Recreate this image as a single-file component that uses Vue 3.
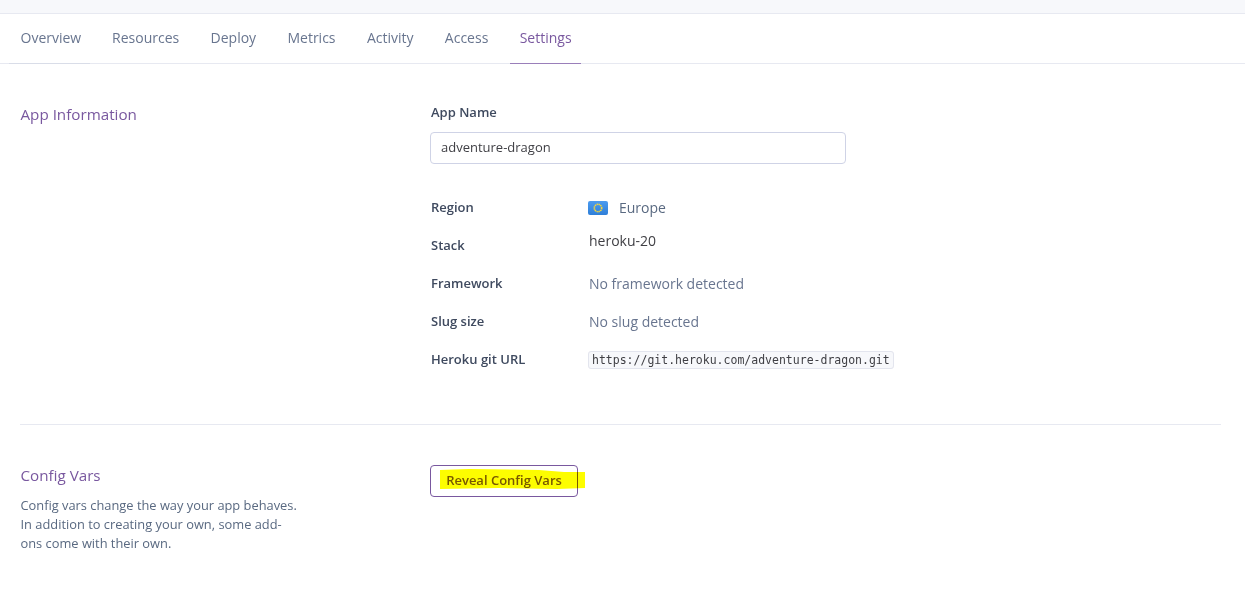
<script setup>
const tabs = ['Overview', 'Resources', 'Deploy', 'Metrics', 'Activity', 'Access', 'Settings']
const activeTab = 'Settings'
</script>

<template>
  <div class="page">
    <div class="top-strip"></div>

    <nav class="tabs">
      <a
        v-for="tab in tabs"
        :key="tab"
        class="tab"
        :class="{ active: tab === activeTab, first: tab === 'Overview' }"
      >{{ tab }}</a>
    </nav>

    <section class="section app-info">
      <h2 class="section-title">App Information</h2>
      <div class="section-body">
        <label class="field-label">App Name</label>
        <input class="name-input" type="text" value="adventure-dragon" />

        <dl class="details">
          <dt>Region</dt>
          <dd class="region">
            <svg class="flag" viewBox="0 0 20 14" width="20" height="14">
              <defs>
                <linearGradient id="flagFill" x1="0" y1="0" x2="0" y2="1">
                  <stop offset="0" stop-color="#4b9bf0" />
                  <stop offset="1" stop-color="#2f7fd8" />
                </linearGradient>
              </defs>
              <rect width="20" height="14" rx="2" fill="url(#flagFill)" />
              <circle cx="10" cy="7" r="3.7" fill="none" stroke="#f5d63c" stroke-width="1.6" stroke-dasharray="1.4 0.54" />
            </svg>
            <span>Europe</span>
          </dd>
          <dt>Stack</dt>
          <dd class="stack">heroku-20</dd>
          <dt>Framework</dt>
          <dd class="muted">No framework detected</dd>
          <dt>Slug size</dt>
          <dd class="muted">No slug detected</dd>
          <dt>Heroku git URL</dt>
          <dd><code class="git-url">https://git.heroku.com/adventure-dragon.git</code></dd>
        </dl>
      </div>
    </section>

    <section class="section config">
      <div class="section-side">
        <h2 class="section-title">Config Vars</h2>
        <p class="section-text">Config vars change the way your app behaves. In addition to creating your own, some add-ons come with their own.</p>
      </div>
      <div class="section-body">
        <div class="reveal-wrap">
          <button class="reveal-btn">Reveal Config Vars</button>
          <svg class="marker" viewBox="0 0 146 24" width="146" height="24">
            <path d="M1 1 L30 0 L100 1 L125 3 L146 3 L146 19 L118 20 L60 19 L1 20 Z" fill="#fdfd00" />
          </svg>
        </div>
      </div>
    </section>
  </div>
</template>

<style scoped>
.page {
  height: 592px;
  overflow: hidden;
  background: #fff;
  font-family: "Open Sans", "Noto Sans", sans-serif;
  font-size: 14px;
  color: #596981;
}

.top-strip {
  height: 13px;
  background: #f7f8fb;
  border-bottom: 1px solid #e7e9f1;
}

.tabs {
  display: flex;
  height: 49px;
  padding-left: 9px;
  border-bottom: 1px solid #e7e9f1;
}

.tab {
  display: flex;
  align-items: center;
  box-sizing: border-box;
  height: 50px;
  margin-right: 12.35px;
  padding: 0 9.5px 3px;
  border-bottom: 1px solid transparent;
  color: #68758f;
  font-size: 14px;
}

.tab.first {
  padding: 0 9px 3px 11.5px;
  border-bottom-color: #d9dde8;
}

.tab.active {
  color: #79589f;
  border-bottom-color: #9a7fba;
}

.section {
  display: flex;
  margin: 0 24px 0 20px;
}

.app-info {
  padding: 38px 0 46px;
  border-bottom: 1px solid #e7e9f1;
}

.config {
  padding-top: 40px;
}

.section-side,
.app-info .section-title {
  flex: none;
  box-sizing: border-box;
  width: 410px;
}

.section-side {
  margin-top: -2px;
}

.section-title {
  margin: 0;
  padding-left: 0.5px;
  font-size: 15.2px;
  font-weight: 400;
  line-height: 24px;
  color: #79589f;
}

.section-text {
  width: 282px;
  margin: 9px 0 0;
  padding-left: 0.5px;
  font-size: 12.85px;
  line-height: 19px;
  color: #596981;
}

.field-label {
  display: block;
  padding-left: 1px;
  font-size: 13px;
  font-weight: 600;
  line-height: 20px;
  color: #3f4a5f;
}

.name-input {
  display: block;
  box-sizing: border-box;
  width: 416px;
  height: 32px;
  margin-top: 10px;
  padding: 0 10px 2px;
  border: 1px solid #cfd3e6;
  border-radius: 4px;
  font-family: inherit;
  font-size: 13px;
  color: #3f3f44;
  outline: none;
}

.details {
  display: grid;
  grid-template-columns: 158px 1fr;
  grid-auto-rows: 38px;
  margin: 24px 0 0;
}

.details dt {
  padding-left: 1px;
  font-size: 13px;
  font-weight: 600;
  line-height: 38px;
  color: #3f4a5f;
}

.details dd {
  margin: 0;
  font-size: 14px;
  line-height: 38px;
}

.region {
  display: flex;
  align-items: center;
  gap: 11px;
  padding-top: 2px;
  color: #596981;
}

.flag {
  flex: none;
}

.stack {
  padding-left: 1px;
  color: #3f3f44;
  transform: translateY(-4px);
}

.muted {
  padding-left: 1px;
  padding-top: 1px;
  color: #68758f;
}

.git-url {
  padding: 1px 3px;
  background: #f7f8fb;
  border: 1px solid #e3e5ee;
  border-radius: 3px;
  font-family: "DejaVu Sans Mono", monospace;
  font-size: 11.5px;
  color: #3f3f44;
}

.reveal-wrap {
  position: relative;
  width: 148px;
}

.reveal-btn {
  display: block;
  box-sizing: border-box;
  width: 148px;
  height: 32px;
  background: #fff;
  border: 1px solid #79589f;
  border-radius: 4px;
  font-family: inherit;
  font-size: 13px;
  font-weight: 600;
  color: #79589f;
  padding: 0 0 2px;
}

.marker {
  position: absolute;
  left: 9px;
  top: 4px;
  mix-blend-mode: multiply;
}
</style>
